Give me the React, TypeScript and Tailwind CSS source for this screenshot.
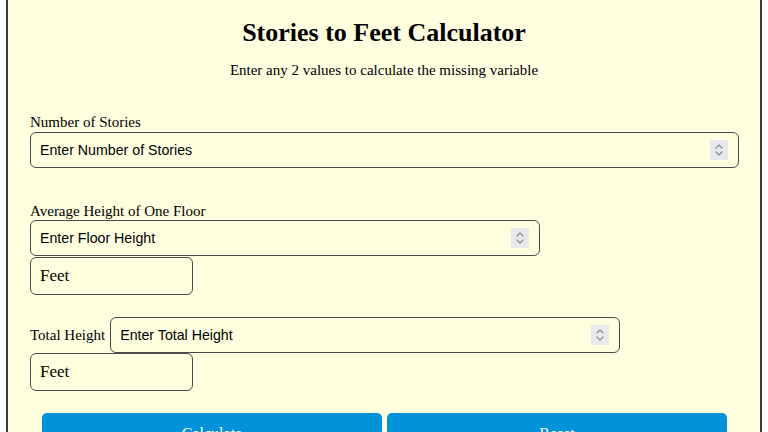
import React from "react";

function Spinner() {
  return (
    <div className="w-[18px] h-[20px] bg-[#e9e9ed] flex items-center justify-center shrink-0">
      <svg width="12" height="16" viewBox="0 0 12 16" fill="none" stroke="#8a8a90" strokeWidth="1.2" strokeLinecap="round" strokeLinejoin="round">
        <path d="M3 6 L6 3 L9 6" />
        <path d="M3 10 L6 13 L9 10" />
      </svg>
    </div>
  );
}

function NumberField({ placeholder, width }: { placeholder: string; width: string }) {
  return (
    <div className={`${width} h-[36px] border border-[#4a4a4a] rounded-[6px] flex items-center pl-[9px] pr-[10px] bg-[#ffffe0]`}>
      <input
        type="text"
        placeholder={placeholder}
        className="flex-1 min-w-0 bg-transparent outline-none text-[14px] pt-[1px] text-black placeholder:text-black"
        style={{ fontFamily: '"Liberation Sans", Arial, sans-serif', fontSize: "14.2px" }}
      />
      <Spinner />
    </div>
  );
}

function UnitBox() {
  return (
    <div
      className="w-[163px] h-[38px] border border-[#4a4a4a] rounded-[6px] flex items-center pl-[9px] text-[17px] text-black bg-[#ffffe0]"
      style={{ fontFamily: '"Liberation Serif", "Times New Roman", serif' }}
    >
      Feet
    </div>
  );
}

export default function App() {
  return (
    <div className="bg-white w-[768px] h-[432px] overflow-hidden" style={{ fontFamily: '"Liberation Serif", serif' }}>
      <div className="ml-[6px] w-[756px] h-[432px] border-x-2 border-[#3a3a3a] bg-[#ffffe0] pl-[22px] overflow-hidden">
        <h1 className="pt-[18px] text-center text-[26px] leading-[30px] font-bold text-black pr-[22px]">
          Stories to Feet Calculator
        </h1>
        <p className="mt-[12px] text-center text-[15px] leading-[20px] text-black pr-[22px]">
          Enter any 2 values to calculate the missing variable
        </p>

        <div className="mt-[34px] text-[15px] leading-[16px] text-black">Number of Stories</div>
        <div className="mt-[2px]">
          <NumberField placeholder="Enter Number of Stories" width="w-[709px]" />
        </div>

        <div className="mt-[35px] text-[15px] leading-[16px] text-black">Average Height of One Floor</div>
        <div className="mt-[1px]">
          <NumberField placeholder="Enter Floor Height" width="w-[510px]" />
        </div>
        <div className="mt-[1px]">
          <UnitBox />
        </div>

        <div className="mt-[22px] flex items-center gap-[5px]">
          <span className="text-[15px] text-black pt-[1px]">Total Height</span>
          <NumberField placeholder="Enter Total Height" width="w-[510px]" />
        </div>
        <div>
          <UnitBox />
        </div>

        <div className="mt-[22px] ml-[12px] flex gap-[5px]">
          <button className="w-[340px] h-[40px] bg-[#0093d9] rounded-[5px] text-white text-[16px] pt-[1px]">
            Calculate
          </button>
          <button className="w-[340px] h-[40px] bg-[#0093d9] rounded-[5px] text-white text-[16px] pt-[1px]">
            Reset
          </button>
        </div>
      </div>
    </div>
  );
}
